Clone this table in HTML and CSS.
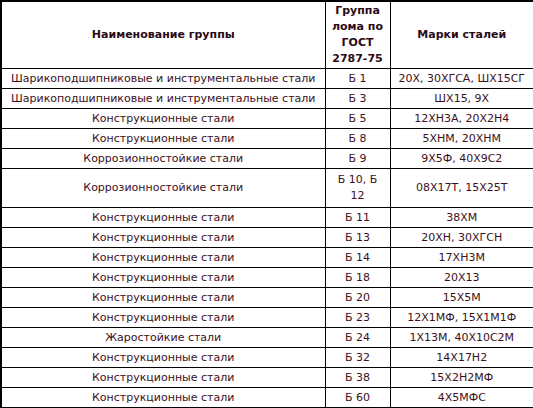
FILE: index.html
```html
<!DOCTYPE html>
<html lang="ru">
<head>
<meta charset="utf-8">
<link rel="stylesheet" href="styles.css">
</head>
<body>
<table class="steel">
  <colgroup>
    <col class="c-name">
    <col class="c-group">
    <col class="c-marks">
  </colgroup>
  <thead>
    <tr class="head">
      <th>Наименование группы</th>
      <th class="grp">Группа лома по ГОСТ 2787-75</th>
      <th>Марки сталей</th>
    </tr>
  </thead>
  <tbody>
    <tr><td>Шарикоподшипниковые и инструментальные стали</td><td class="grp">Б 1</td><td>20Х, 30ХГСА, ШХ15СГ</td></tr>
    <tr><td>Шарикоподшипниковые и инструментальные стали</td><td class="grp">Б 3</td><td>ШХ15, 9Х</td></tr>
    <tr><td>Конструкционные стали</td><td class="grp">Б 5</td><td>12ХН3А, 20Х2Н4</td></tr>
    <tr><td>Конструкционные стали</td><td class="grp">Б 8</td><td>5ХНМ, 20ХНМ</td></tr>
    <tr><td>Коррозионностойкие стали</td><td class="grp">Б 9</td><td>9Х5Ф, 40Х9С2</td></tr>
    <tr class="tall"><td>Коррозионностойкие стали</td><td class="grp">Б 10, Б 12</td><td>08Х17Т, 15Х25Т</td></tr>
    <tr><td>Конструкционные стали</td><td class="grp">Б 11</td><td>38ХМ</td></tr>
    <tr><td>Конструкционные стали</td><td class="grp">Б 13</td><td>20ХН, 30ХГСН</td></tr>
    <tr><td>Конструкционные стали</td><td class="grp">Б 14</td><td>17ХН3М</td></tr>
    <tr><td>Конструкционные стали</td><td class="grp">Б 18</td><td>20Х13</td></tr>
    <tr><td>Конструкционные стали</td><td class="grp">Б 20</td><td>15Х5М</td></tr>
    <tr><td>Конструкционные стали</td><td class="grp">Б 23</td><td>12Х1МФ, 15Х1М1Ф</td></tr>
    <tr><td>Жаростойкие стали</td><td class="grp">Б 24</td><td>1Х13М, 40Х10С2М</td></tr>
    <tr><td>Конструкционные стали</td><td class="grp">Б 32</td><td>14Х17Н2</td></tr>
    <tr><td>Конструкционные стали</td><td class="grp">Б 38</td><td>15Х2Н2МФ</td></tr>
    <tr><td>Конструкционные стали</td><td class="grp">Б 60</td><td>4Х5МФС</td></tr>
  </tbody>
</table>
</body>
</html>
```
FILE: styles.css
```css
html, body {
  margin: 0;
  padding: 0;
  background: #ffffff;
}

.steel {
  width: 533px;
  border-collapse: collapse;
  table-layout: fixed;
  border: 2px solid #000000;
  font-family: "DejaVu Sans", Verdana, sans-serif;
  font-size: 11px;
  color: #3c1022;
}

.c-name { width: 324px; }
.c-group { width: 65px; }
.c-marks { width: 144px; }

.steel th,
.steel td {
  border: 1px solid #000000;
  text-align: center;
  vertical-align: middle;
  padding: 0 2px;
  line-height: 16px;
  height: 19px;
}

.steel .grp {
  padding: 0 5px;
}

.steel th {
  font-weight: bold;
  color: #2a0a14;
  height: 66px;
}

.steel .tall td {
  height: 38px;
}
```
